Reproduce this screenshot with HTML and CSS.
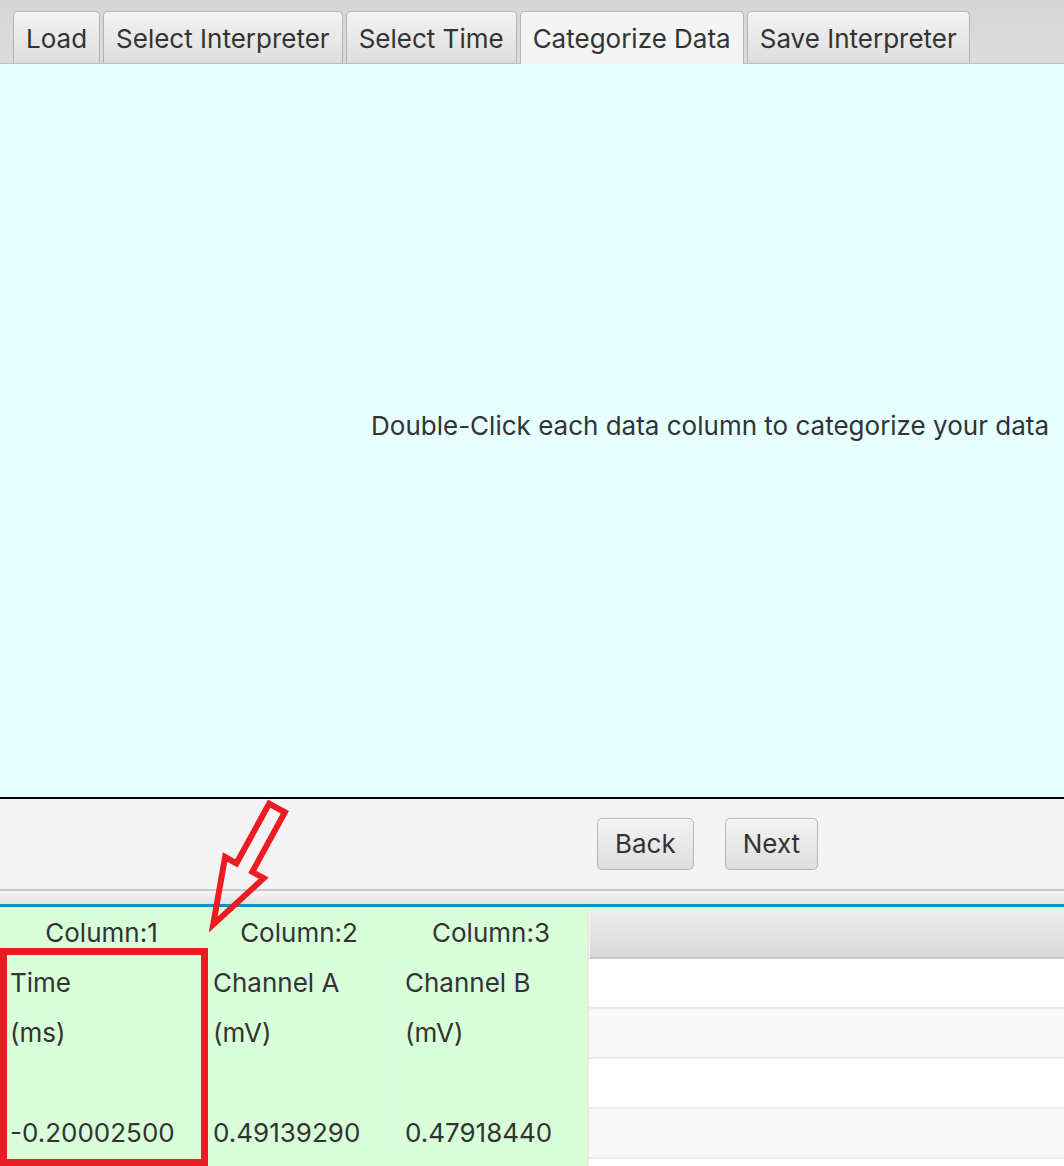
FILE: index.html
```html
<!DOCTYPE html>
<html>
<head>
<meta charset="utf-8">
<link rel="stylesheet" href="styles.css">
</head>
<body>
<div class="app">
  <div class="tabbar">
    <div class="tab">Load</div>
    <div class="tab">Select Interpreter</div>
    <div class="tab">Select Time</div>
    <div class="tab tab-selected">Categorize Data</div>
    <div class="tab">Save Interpreter</div>
  </div>
  <div class="content">
    <span class="msg">Double-Click each data column to categorize your data</span>
  </div>
  <div class="navbar">
    <button class="btn btn-back">Back</button>
    <button class="btn btn-next">Next</button>
  </div>
  <div class="divider"></div>
  <div class="table">
    <div class="cols">
      <div class="col col-1">
        <div class="colhead">Column:1</div>
        <div class="cells">
          <div class="cell">Time</div>
          <div class="cell">(ms)</div>
          <div class="cell"></div>
          <div class="cell">-0.20002500</div>
        </div>
      </div>
      <div class="col col-2">
        <div class="colhead">Column:2</div>
        <div class="cells">
          <div class="cell">Channel A</div>
          <div class="cell">(mV)</div>
          <div class="cell"></div>
          <div class="cell">0.49139290</div>
        </div>
      </div>
      <div class="col col-3">
        <div class="colhead">Column:3</div>
        <div class="cells">
          <div class="cell">Channel B</div>
          <div class="cell">(mV)</div>
          <div class="cell"></div>
          <div class="cell">0.47918440</div>
        </div>
      </div>
    </div>
    <div class="rest">
      <div class="rest-head"></div>
      <div class="row row-even"></div>
      <div class="row row-odd"></div>
      <div class="row row-even"></div>
      <div class="row row-odd"></div>
      <div class="row row-even"></div>
    </div>
  </div>
  <svg class="annot" width="1064" height="1166" viewBox="0 0 1064 1166">
    <rect x="3.5" y="951.5" width="201" height="211" fill="none" stroke="#ed1c24" stroke-width="7"/>
    <polygon points="269.1,803.7 284.9,812.3 252.3,871.9 263.7,878.2 213.2,924.6 225.1,857 236.5,863.3" fill="none" stroke="#ed1c24" stroke-width="6" stroke-linejoin="miter" stroke-miterlimit="10"/>
  </svg>
</div>
</body>
</html>
```
FILE: styles.css
```css
html, body {
  margin: 0;
  padding: 0;
}
body {
  width: 1064px;
  height: 1166px;
  overflow: hidden;
  font-family: "Inter", "Liberation Sans", sans-serif;
  color: #333333;
}
.app {
  position: relative;
  width: 1064px;
  height: 1166px;
  display: flex;
  flex-direction: column;
}
.tabbar {
  flex: 0 0 63px;
  box-sizing: border-box;
  padding: 11px 0 0 13px;
  display: flex;
  gap: 3px;
  background: linear-gradient(#d6d6d6, #dcdcdc);
  border-bottom: 1px solid #bdbdbd;
}
.tab {
  box-sizing: border-box;
  height: 52px;
  padding: 1px 12px 0;
  display: flex;
  align-items: center;
  font-size: 26px;
  border: 1.5px solid #b3b3b3;
  border-bottom: none;
  border-radius: 5px 5px 0 0;
  background: linear-gradient(#f3f3f3, #dedede);
  box-shadow: inset 0 1px 0 #fafafa;
}
.tab-selected {
  background: #f4f4f4;
  height: 53px;
  margin-bottom: -1px;
  padding-bottom: 1px;
}
.content {
  flex: 0 0 733px;
  background: #e6ffff;
  display: flex;
  align-items: center;
  justify-content: flex-end;
  padding-right: 15px;
  padding-bottom: 10px;
  box-sizing: border-box;
}
.msg {
  font-size: 26px;
}
.navbar {
  flex: 0 0 92px;
  box-sizing: border-box;
  border-top: 2px solid #000000;
  background: #f4f4f4;
  display: flex;
  align-items: flex-start;
  padding: 19px 0 0 597px;
  gap: 31px;
}
.btn {
  box-sizing: border-box;
  height: 52px;
  padding: 0 17px 2px;
  font-family: "Inter", "Liberation Sans", sans-serif;
  font-size: 26px;
  color: #333333;
  border: 1.5px solid #b3b3b3;
  border-radius: 5px;
  background: linear-gradient(#f3f3f3, #dedede);
  box-shadow: inset 0 1px 0 #fafafa;
}
.divider {
  flex: 0 0 18px;
  box-sizing: border-box;
  border-top: 2px solid #c8c8c8;
  border-bottom: 3px solid #0096c9;
  background: linear-gradient(#f6f6f6, #e2e2e2);
}
.table {
  flex: 1;
  display: flex;
  background: #ffffff;
}
.cols {
  display: flex;
  background: #d9ffd9;
}
.col-1 { width: 203px; }
.col-2 { width: 192px; }
.col-3 { width: 192px; }
.colhead {
  height: 52px;
  display: flex;
  align-items: center;
  justify-content: center;
  font-size: 26px;
  padding-bottom: 2px;
  box-sizing: border-box;
}
.col-2 .cells, .col-3 .cells {
  border-left: 1px solid #e4eee4;
}
.cell {
  box-sizing: border-box;
  height: 50px;
  display: flex;
  align-items: center;
  padding-left: 10px;
  padding-bottom: 3px;
  font-size: 26px;
}
.col-2 .cell, .col-3 .cell {
  padding-left: 9px;
}
.rest {
  flex: 1;
  border-left: 2px solid #e8e8e8;
}
.rest-head {
  height: 52px;
  box-sizing: border-box;
  border-top: 1px solid #f4f4f4;
  border-left: 1px solid #f2f2f2;
  border-bottom: 2px solid #c4c4c4;
  background: linear-gradient(#eeeeee, #d9d9d9);
}
.row {
  height: 48px;
  border-bottom: 2px solid #ebebeb;
}
.row-even { background: #ffffff; }
.row-odd { background: #f8f8f8; }
.annot {
  position: absolute;
  left: 0;
  top: 0;
  pointer-events: none;
}
```
